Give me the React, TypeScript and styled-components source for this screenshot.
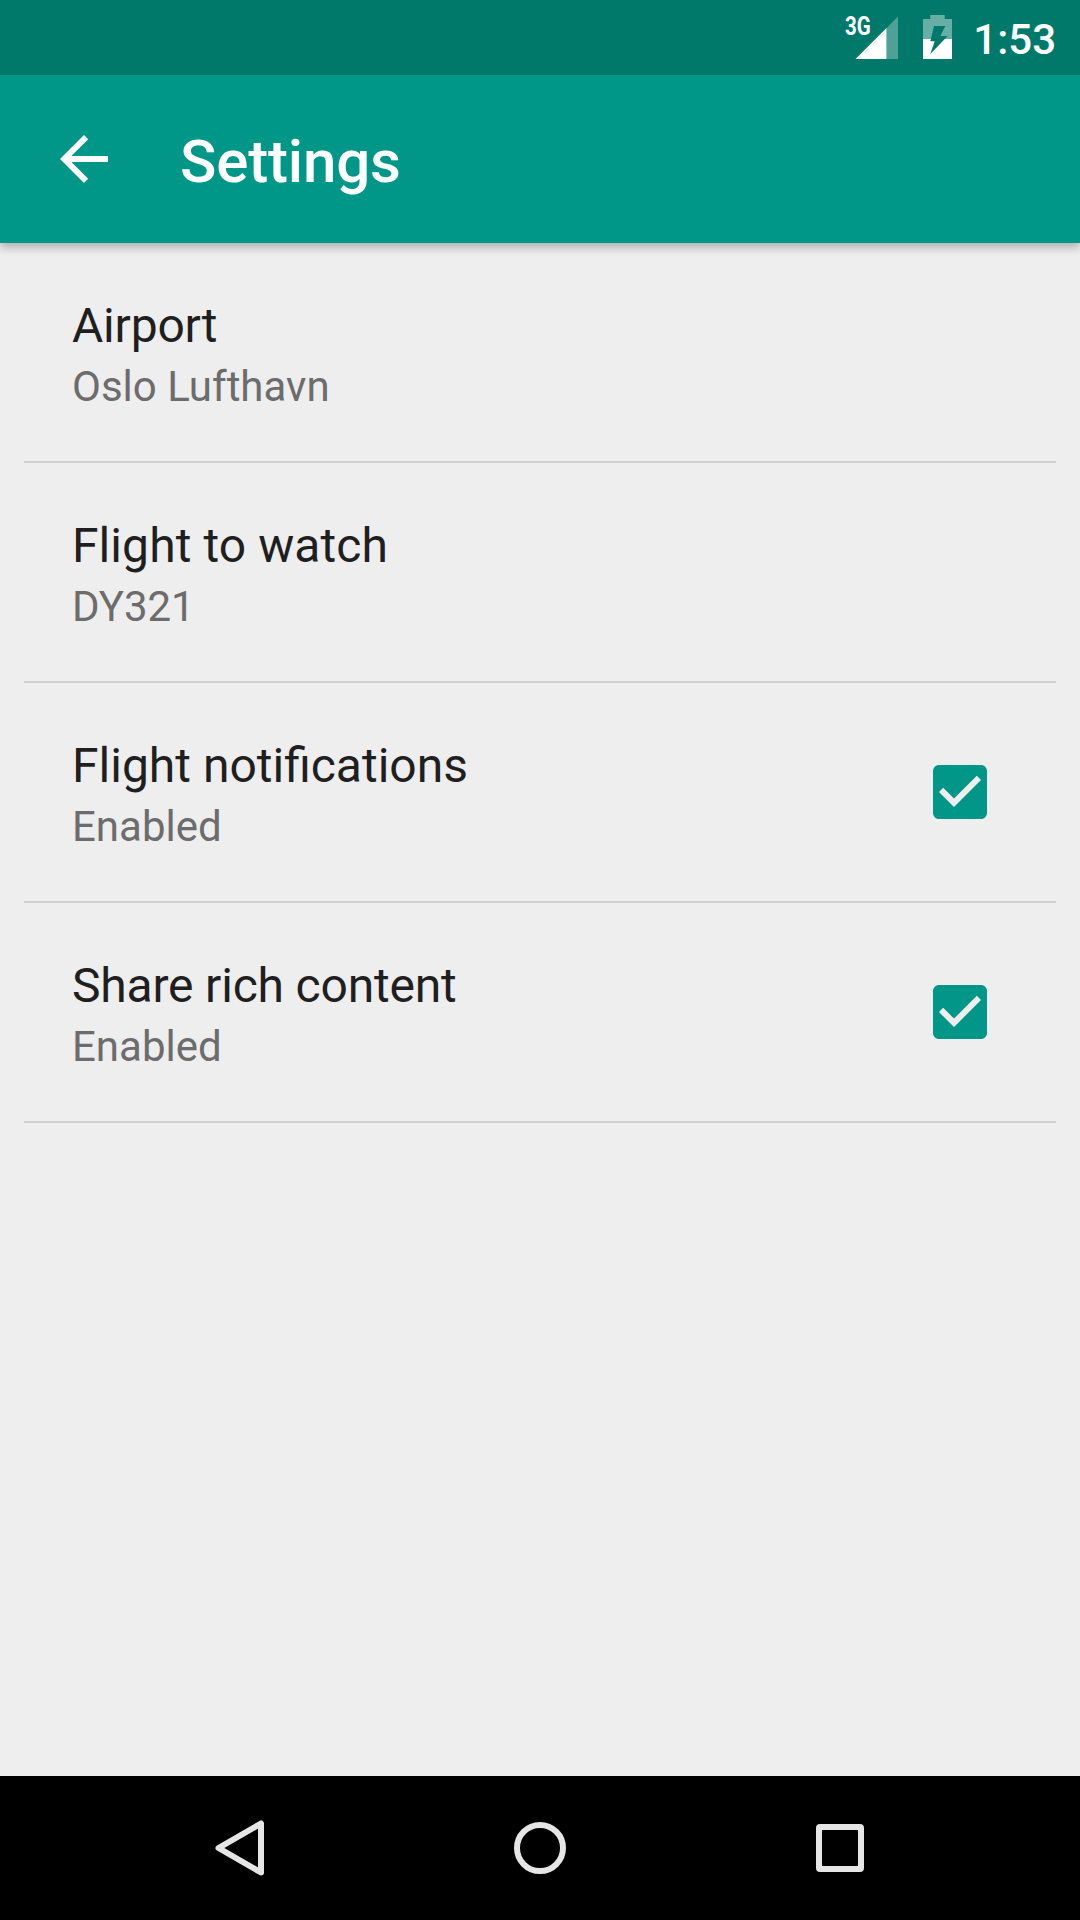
import React from "react";
import styled, { createGlobalStyle } from "styled-components";

const GlobalStyle = createGlobalStyle`
  *, *::before, *::after { box-sizing: border-box; }
  body { margin: 0; background: #eeeeee; font-family: Roboto, sans-serif; }
`;

const Screen = styled.div`
  display: flex;
  flex-direction: column;
  width: 1080px;
  height: 1920px;
  background: #eeeeee;
  overflow: hidden;
`;

const StatusBar = styled.header`
  display: flex;
  justify-content: flex-end;
  height: 75px;
  padding: 15px 24px 0 0;
  background: #00796b;
  color: #ffffff;
`;

const NetworkLabel = styled.span`
  width: 25px;
  margin: 2px -15px 0 0;
  font-size: 25px;
  font-weight: 700;
  line-height: 19px;
  white-space: nowrap;
  transform: scaleX(0.82);
  transform-origin: left top;
`;

const SignalIcon = styled.svg`
  width: 43px;
  height: 45px;
  margin-right: 25px;
`;

const BatteryIcon = styled.svg`
  width: 29px;
  height: 45px;
  margin-right: 21px;
`;

const Clock = styled.time`
  font-size: 42px;
  font-weight: 500;
  line-height: 49px;
`;

const AppBar = styled.div`
  display: flex;
  flex: none;
  gap: 60px;
  height: 168px;
  padding: 48px 48px 0;
  background: #009688;
  color: #ffffff;
  box-shadow: 0 5px 8px rgba(0, 0, 0, 0.24);
`;

const BackIcon = styled.svg`
  width: 72px;
  height: 72px;
  fill: currentColor;
`;

const PageTitle = styled.h1`
  margin: 3px 0 0;
  font-size: 60px;
  font-weight: 500;
  line-height: 71px;
  letter-spacing: -0.15px;
`;

const SettingsList = styled.main`
  flex: 1;
  padding: 0 24px;
`;

const SettingRow = styled.section`
  display: flex;
  align-items: center;
  justify-content: space-between;
  height: 220px;
  padding: 0 60px 0 48px;
  border-bottom: 2px solid #d0d0d0;
`;

const SettingText = styled.div`
  display: flex;
  flex-direction: column;
  align-self: flex-start;
  gap: 8px;
  padding-top: 54px;
`;

const SettingTitle = styled.h2<{ $tracking?: number }>`
  margin: 0;
  color: #1f1f1f;
  font-size: 48px;
  font-weight: 400;
  line-height: 57px;
  letter-spacing: ${({ $tracking }) => ($tracking ? `${$tracking}px` : "normal")};
`;

const SettingSummary = styled.p`
  margin: 0;
  color: #6c6c6c;
  font-size: 42px;
  line-height: 49px;
`;

const CheckIcon = styled.svg`
  width: 72px;
  height: 72px;
  fill: #009688;
`;

const NavBar = styled.nav`
  display: flex;
  flex: none;
  height: 144px;
  padding: 0 90px;
  background: #000000;
`;

const NavButton = styled.div`
  display: flex;
  flex: 1;
  align-items: center;
  justify-content: center;
`;

const NavIcon = styled.svg`
  width: 72px;
  height: 72px;
  fill: none;
  stroke: #e6e6e6;
  stroke-width: 6;
  stroke-linejoin: round;
`;

type Setting = {
  title: string;
  summary: string;
  tracking?: number;
  checked?: boolean;
};

const settings: Setting[] = [
  { title: "Airport", summary: "Oslo Lufthavn", tracking: -0.2 },
  { title: "Flight to watch", summary: "DY321", tracking: 0.08 },
  { title: "Flight notifications", summary: "Enabled", checked: true },
  { title: "Share rich content", summary: "Enabled", tracking: -0.19, checked: true },
];

export default function App() {
  return (
    <Screen>
      <GlobalStyle />
      <StatusBar>
        <NetworkLabel>3G</NetworkLabel>
        <SignalIcon viewBox="0 0 43 45">
          <path d="M31.5 13 43 1.5V44H31.5z" fill="#fff" fillOpacity="0.3" />
          <path d="M0.5 44 31.5 13V44z" fill="#fff" />
        </SignalIcon>
        <BatteryIcon viewBox="0 0 29 45">
          <path
            fill="#fff"
            fillOpacity="0.4"
            d="M7.3 0H21.7V4H29V24H21.8L24.7 21H17.3L22.3 11H11L7.9 24H0V4H7.3z"
          />
          <path fill="#fff" d="M0 24H7.9L7.3 26.3H11.7L7.3 39 21.8 24H29V44H0z" />
        </BatteryIcon>
        <Clock>1:53</Clock>
      </StatusBar>
      <AppBar>
        <BackIcon viewBox="0 0 24 24">
          <path d="M20 11H7.8l5.6-5.6L12 4l-8 8 8 8 1.4-1.4L7.8 13H20v-2z" />
        </BackIcon>
        <PageTitle>Settings</PageTitle>
      </AppBar>
      <SettingsList>
        {settings.map((s) => (
          <SettingRow key={s.title}>
            <SettingText>
              <SettingTitle $tracking={s.tracking}>{s.title}</SettingTitle>
              <SettingSummary>{s.summary}</SettingSummary>
            </SettingText>
            {s.checked && (
              <CheckIcon viewBox="0 0 24 24">
                <path d="M19 3H5c-1.1 0-2 .9-2 2v14c0 1.1.9 2 2 2h14c1.1 0 2-.9 2-2V5c0-1.1-.9-2-2-2zm-9 14l-5-5 1.4-1.4 3.6 3.6 7.6-7.6L19 8l-9 9z" />
              </CheckIcon>
            )}
          </SettingRow>
        ))}
      </SettingsList>
      <NavBar>
        <NavButton>
          <NavIcon viewBox="0 0 72 72">
            <path d="M57 11.5 V60.5 L14.5 36z" />
          </NavIcon>
        </NavButton>
        <NavButton>
          <NavIcon viewBox="0 0 72 72">
            <circle cx="36" cy="36" r="23" />
          </NavIcon>
        </NavButton>
        <NavButton>
          <NavIcon viewBox="0 0 72 72">
            <rect x="15" y="15" width="42" height="42" rx="1" />
          </NavIcon>
        </NavButton>
      </NavBar>
    </Screen>
  );
}
